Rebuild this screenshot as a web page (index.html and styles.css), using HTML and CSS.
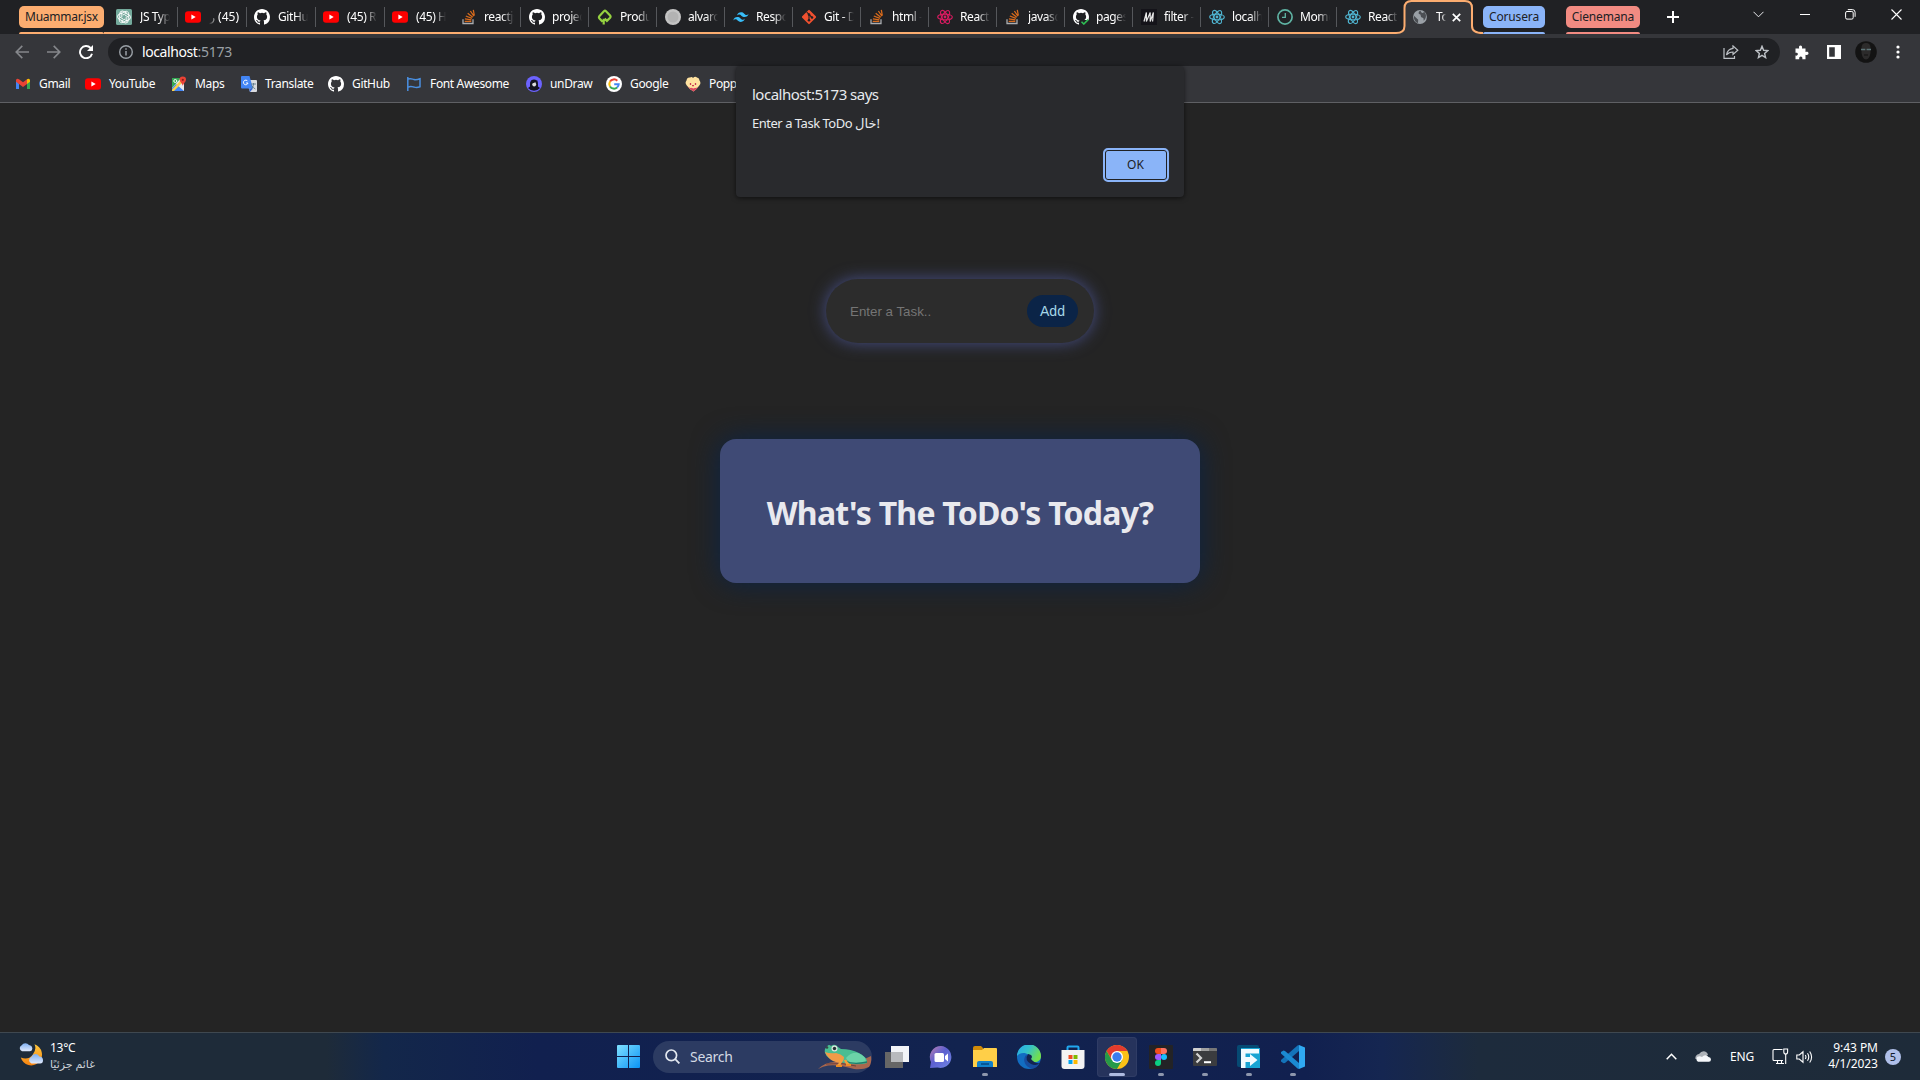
FILE: index.html
```html
<!DOCTYPE html>
<html lang="en">
<head>
<meta charset="utf-8">
<title>ToDo</title>
<link rel="stylesheet" href="styles.css">
</head>
<body>
<svg class="defs" width="0" height="0" aria-hidden="true">
  <defs>
    <symbol id="youtube" viewBox="0 0 16 16"><rect x="0" y="2.3" width="16" height="11.4" rx="3" fill="#f00"/><path d="M6.4 5.5v5l4.3-2.5z" fill="#fff"/></symbol>
    <symbol id="github" viewBox="0 0 16 16"><path fill="#fff" d="M8 0C3.58 0 0 3.58 0 8c0 3.54 2.29 6.53 5.47 7.59.4.07.55-.17.55-.38 0-.19-.01-.82-.01-1.49-2.01.37-2.53-.49-2.69-.94-.09-.23-.48-.94-.82-1.13-.28-.15-.68-.52-.01-.53.63-.01 1.08.58 1.23.82.72 1.21 1.87.87 2.33.66.07-.52.28-.87.51-1.07-1.78-.2-3.64-.89-3.64-3.95 0-.87.31-1.59.82-2.15-.08-.2-.36-1.02.08-2.12 0 0 .67-.21 2.2.82a7.6 7.6 0 0 1 4 0c1.53-1.04 2.2-.82 2.2-.82.44 1.1.16 1.92.08 2.12.51.56.82 1.27.82 2.15 0 3.07-1.87 3.75-3.65 3.95.29.25.54.73.54 1.48 0 1.07-.01 1.93-.01 2.2 0 .21.15.46.55.38A8.01 8.01 0 0 0 16 8c0-4.42-3.58-8-8-8z"/></symbol>
    <symbol id="stack" viewBox="0 0 16 16"><path d="M2 10.3v4.2h10v-4.2" fill="none" stroke="#aaadb0" stroke-width="1.3"/><path d="M3.7 12.3h6.6M3.9 9.8l6.5 1M4.8 7l6.1 2.3M6.7 4.3l5.1 4M9.4 2l3.5 5.2M12.3.8l1 5.7" stroke="#d96b1c" stroke-width="1.3" fill="none"/></symbol>
    <symbol id="react" viewBox="0 0 16 16"><g fill="none" stroke="currentColor" stroke-width="1.2"><ellipse cx="8" cy="8" rx="7.3" ry="2.9"/><ellipse cx="8" cy="8" rx="7.3" ry="2.9" transform="rotate(60 8 8)"/><ellipse cx="8" cy="8" rx="7.3" ry="2.9" transform="rotate(120 8 8)"/></g><circle cx="8" cy="8" r="1.4" fill="currentColor"/></symbol>
    <symbol id="openai" viewBox="0 0 16 16"><rect width="16" height="16" rx="1.5" fill="#74aa9c"/><g fill="none" stroke="#fff" stroke-width=".9"><path d="M6 4.3l3-1.7a2.5 2.5 0 0 1 3.7 2.3v3.3L8.9 6"/><path d="M6 4.3l3-1.7a2.5 2.5 0 0 1 3.7 2.3v3.3L8.9 6" transform="rotate(60 8 8)"/><path d="M6 4.3l3-1.7a2.5 2.5 0 0 1 3.7 2.3v3.3L8.9 6" transform="rotate(120 8 8)"/><path d="M6 4.3l3-1.7a2.5 2.5 0 0 1 3.7 2.3v3.3L8.9 6" transform="rotate(180 8 8)"/><path d="M6 4.3l3-1.7a2.5 2.5 0 0 1 3.7 2.3v3.3L8.9 6" transform="rotate(240 8 8)"/><path d="M6 4.3l3-1.7a2.5 2.5 0 0 1 3.7 2.3v3.3L8.9 6" transform="rotate(300 8 8)"/></g></symbol>
  </defs>
</svg>

<div class="screen">
  <header class="chrome">
    <div class="tabstrip">
      <span class="chip chip-orange">Muammar.jsx</span>
      <nav class="tabs">
        <div class="tab tab-first"><svg class="fav"><use href="#openai"/></svg><span class="tab-title">JS Types</span></div>
        <div class="tab tab-wide"><svg class="fav"><use href="#youtube"/></svg><span class="tab-title tab-title-rtl"><bdi>(45)</bdi> ر</span></div>
        <div class="tab tab-wide"><svg class="fav"><use href="#github"/></svg><span class="tab-title">GitHub</span></div>
        <div class="tab tab-wide"><svg class="fav"><use href="#youtube"/></svg><span class="tab-title">(45) Re</span></div>
        <div class="tab tab-wide"><svg class="fav"><use href="#youtube"/></svg><span class="tab-title">(45) Ho</span></div>
        <div class="tab"><svg class="fav"><use href="#stack"/></svg><span class="tab-title">reactjs</span></div>
        <div class="tab"><svg class="fav"><use href="#github"/></svg><span class="tab-title">project</span></div>
        <div class="tab"><svg class="fav" viewBox="0 0 16 16"><path d="M5.600 12.800L2.500 9.500Q1.400 8.200 2.500 7L6.900 2.200Q8 1.200 9 2.200L13.100 6.500Q14 7.600 13.100 8.700L9.900 11.900 7.600 9.600M6.700 15.500V9.800" fill="none" stroke="#95d140" stroke-width="2.200"/></svg><span class="tab-title">Produc</span></div>
        <div class="tab"><svg class="fav" viewBox="0 0 16 16"><circle cx="8" cy="8" r="8" fill="#c4c4c4"/><circle cx="8" cy="8" r="5.5" fill="#b3b3b3"/></svg><span class="tab-title">alvaro</span></div>
        <div class="tab"><svg class="fav" viewBox="0 0 16 16"><path d="M4 6.6C4.6 4.4 6 3.3 8 3.3c3 0 3.4 2.3 4.9 2.6 1 .3 1.9-.1 2.7-1.1-.6 2.2-2 3.3-4 3.3-3 0-3.400-2.300-4.900-2.600-1-.3-1.900.1-2.700 1.100zM.3 11.400C.9 9.200 2.300 8.100 4.300 8.100c3 0 3.400 2.300 4.900 2.600 1 .3 1.900-.1 2.700-1.100-.6 2.200-2 3.300-4 3.300-3 0-3.400-2.300-4.900-2.600-1-.3-1.900.1-2.700 1.100z" fill="#38bdf8"/></svg><span class="tab-title">Respo</span></div>
        <div class="tab"><svg class="fav" viewBox="0 0 16 16"><rect x="2.700" y="2.700" width="10.600" height="10.600" rx="1" transform="rotate(45 8 8)" fill="#f0502f"/><path d="M5.700 3l2.300 2.500v6M8 5.500l3 3" stroke="#202124" stroke-width="1.100" fill="none"/><g fill="#202124"><circle cx="8" cy="5.600" r="1.300"/><circle cx="8" cy="11.200" r="1.300"/><circle cx="11" cy="8.500" r="1.300"/></g></svg><span class="tab-title">Git - D</span></div>
        <div class="tab"><svg class="fav"><use href="#stack"/></svg><span class="tab-title">html -</span></div>
        <div class="tab"><svg class="fav react-pink"><use href="#react"/></svg><span class="tab-title">React</span></div>
        <div class="tab"><svg class="fav"><use href="#stack"/></svg><span class="tab-title">javascr</span></div>
        <div class="tab"><svg class="fav" viewBox="0 0 16 16"><use href="#github"/><path d="M7 11h9v5H7z" fill="#202124"/><path d="M8.500 12.700l2.300 2.300 4.400-4.400" stroke="#2fbd54" stroke-width="1.600" fill="none"/></svg><span class="tab-title">pages-</span></div>
        <div class="tab"><svg class="fav" viewBox="0 0 16 16"><path d="M0 0h16v16H0z" fill="#141319"/><path d="M3 12.500L5.400 3.500V12.500L9.200 3.500V12.500L12.400 3.500 11.600 12.500" stroke="#e8e8e8" stroke-width="1.200" fill="none"/></svg><span class="tab-title">filter -</span></div>
        <div class="tab"><svg class="fav react-blue"><use href="#react"/></svg><span class="tab-title">localho</span></div>
        <div class="tab"><svg class="fav" viewBox="0 0 16 16"><circle cx="8" cy="8" r="7.100" fill="none" stroke="#5fb3a3" stroke-width="1.700"/><path d="M8.300 4v4.300H5" stroke="#5fb3a3" stroke-width="1.300" fill="none"/></svg><span class="tab-title">Mome</span></div>
        <div class="tab tab-last"><svg class="fav react-blue"><use href="#react"/></svg><span class="tab-title">React</span></div>
      </nav>
      <div class="tab-active">
        <svg class="tab-shape" width="87" height="34" viewBox="0 0 87 34"><path d="M0 34V33C6 33 8.500 30.500 8.500 26V8q0-7 7-7H69q7 0 7 7V26C76 30.500 79 33 87 33V34z" fill="#35363a"/><path d="M0 33C6 33 8.500 30.500 8.500 26V8q0-7 7-7H69q7 0 7 7V26C76 30.500 79 33 87 33" fill="none" stroke="#fcad70" stroke-width="2"/></svg>
        <svg class="fav" viewBox="0 0 16 16"><circle cx="8" cy="8" r="6.900" fill="#9aa0a6"/><path d="M2 6.700l4.200 4.100-.2 3.200C3.500 13.300 1.500 10.500 2 6.700zM8.300 1.500C6.500 3 5.800 4.500 7.500 5.300c2 0 .5 2.700 2.500 3.200 2 .3 1.500 1.600 1.700 3.300 3-2.500 3-7 .3-9-1 2-2.500 1.500-3.700-1.300z" fill="#4b4e53"/></svg>
        <span class="tab-title">Tod</span>
        <svg class="close" viewBox="0 0 9 9"><path d="M.8.800l7.400 7.400M8.200.800L.8 8.200" stroke="#fff" stroke-width="1.700"/></svg>
      </div>
      <span class="chip chip-blue">Corusera</span>
      <span class="chip chip-red">Cienemana</span>
      <svg class="newtab" viewBox="0 0 12 12"><path d="M6 0v12M0 6h12" stroke="#fff" stroke-width="2"/></svg>
      <div class="caption">
        <svg width="11" height="7" viewBox="0 0 11 7"><path d="M.5.800l5 5 5-5" fill="none" stroke="#e8eaed"/></svg>
        <svg width="10" height="2" viewBox="0 0 10 2"><path d="M0 1.500h10" stroke="#fff"/></svg>
        <svg width="11" height="11" viewBox="0 0 11 11"><rect x=".6" y="2.500" width="7.600" height="7.600" rx="1.400" fill="none" stroke="#fff"/><path d="M2.800.600h4.600q2.700 0 2.700 2.700v4.500" fill="none" stroke="#fff"/></svg>
        <svg width="11" height="11" viewBox="0 0 11 11"><path d="M.5.500l10 10M10.500.500l-10 10" stroke="#fff" stroke-width="1.100"/></svg>
      </div>
    </div>

    <div class="toolbar">
      <div class="nav">
        <svg width="14" height="14" viewBox="0 0 14 14"><path d="M14 7H1.500M7.300.900L1.200 7l6.100 6.100" fill="none" stroke="#85878b" stroke-width="1.600"/></svg>
        <svg width="14" height="14" viewBox="0 0 14 14"><path d="M0 7h12.500M6.700.900L12.800 7l-6.100 6.100" fill="none" stroke="#85878b" stroke-width="1.600"/></svg>
        <svg width="14" height="14" viewBox="0 0 14 14"><path d="M11.600 3A6.100 6.100 0 1 0 13 8.700" fill="none" stroke="#fff" stroke-width="1.900"/><path d="M14 0v6H8z" fill="#fff"/></svg>
      </div>
      <div class="omnibox">
        <svg class="info" viewBox="0 0 14 14"><circle cx="7" cy="7" r="6.300" fill="none" stroke="#9aa0a6" stroke-width="1.400"/><path d="M7 6v4.600M7 3.200v1.600" stroke="#9aa0a6" stroke-width="1.500"/></svg>
        <span class="url">localhost<span class="port">:5173</span></span>
        <svg class="share" viewBox="0 0 16 14"><path d="M1 3v10.300h10.500V11" fill="none" stroke="#bdc1c6" stroke-width="1.200"/><path d="M10 .9L14.800 5.200 10 9.500V7C7 7 5 8 3.500 10 4 6.500 6 3.900 10 3.400z" fill="none" stroke="#bdc1c6" stroke-width="1.200"/></svg>
        <svg class="star" viewBox="0 0 14 14"><path d="M7 1.300l1.600 4 4.200.3-3.200 2.800 1 4.200L7 10.400l-3.600 2.200 1-4.200L1.200 5.600l4.200-.3z" fill="none" stroke="#bdc1c6" stroke-width="1.400"/></svg>
      </div>
      <div class="actions">
        <svg width="15" height="15" viewBox="0 0 15 15"><path d="M1.500 3.500h3.700C4.600 1.500 5.300.500 6.500.500S8.500 1.500 8 3.500h3.500V7c2-.6 3 .1 3 1.300s-1 2-3 1.400v4.500H8.300c.5-2-.4-2.800-1.500-2.800s-2 .8-1.500 2.800H1.500v-3.600c1.700.3 2.400-.5 2.400-1.500S3 7.400 1.500 7.800z" fill="#fff"/></svg>
        <svg width="14" height="14" viewBox="0 0 14 14"><path d="M0 0h14v14H0zM2.200 2.200v9.600h5.600V2.200z" fill="#fff" fill-rule="evenodd"/></svg>
        <svg width="22" height="22" viewBox="0 0 22 22"><circle cx="11" cy="11" r="10.800" fill="#131313"/><path d="M6.500 7q0-5 4.500-5t4.500 5v5q-1 6-4.500 6.500Q7.500 18 6.500 12z" fill="#2c2b2b"/><path d="M6 8.500h4.300M11.600 8.500H16" stroke="#5d7477" stroke-width="1.400"/><path d="M9 14h4" stroke="#121212"/></svg>
        <svg width="4" height="14" viewBox="0 0 4 14"><g fill="#fff"><circle cx="2" cy="2" r="1.600"/><circle cx="2" cy="7" r="1.600"/><circle cx="2" cy="12" r="1.600"/></g></svg>
      </div>
    </div>

    <div class="bookmarks">
      <a class="bm"><svg class="fav" viewBox="0 0 16 16"><path d="M1 3.500V13h3V7.500z" fill="#4285f4"/><path d="M12 13h3V3.500l-3 4z" fill="#34a853"/><path d="M4 8L1 5.700V4Q2 2 4 3.300l4 3 4-3v4.600l-4 3z" fill="#ea4335"/><path d="M12 3.300Q14 2 15 4v1.700L12 8z" fill="#fbbc04"/></svg><span>Gmail</span></a>
      <a class="bm"><svg class="fav"><use href="#youtube"/></svg><span>YouTube</span></a>
      <a class="bm"><svg class="fav" viewBox="0 0 16 16"><path d="M1 2h12v13H1z" fill="#e8eaed"/><path d="M1 2h9L1 12z" fill="#34a853"/><path d="M1 12l4-4 8 7H1z" fill="#4285f4"/><path d="M1 13.500L9 5l2 2-8 8H1z" fill="#fbd04a"/><circle cx="4.300" cy="5" r="1.500" fill="none" stroke="#fff"/><path d="M11.800.500a3.200 3.200 0 0 1 3.200 3.300c0 2.200-2.500 3.200-3.200 6-.7-2.800-3.200-3.800-3.200-6A3.200 3.200 0 0 1 11.800.500z" fill="#ea4335"/><circle cx="11.800" cy="3.800" r="1.100" fill="#8c1d18"/></svg><span>Maps</span></a>
      <a class="bm"><svg class="fav" viewBox="0 0 16 16"><path d="M5 4h10q1 0 1 1v10q0 1-1 1H9z" fill="#dadce0"/><path d="M1 0h7.500L12 12.500H1q-1 0-1-1V1q0-1 1-1z" fill="#4285f4"/><path d="M6.700 5.200A2.300 2.300 0 1 0 7 7H4.900" fill="none" stroke="#fff" stroke-width="1"/><path d="M10 8h5M12.500 7v1c0 2-1 4-2.500 5M10.800 9.500c.8 1.500 2 2.700 3.500 3.500" fill="none" stroke="#5f7a8a" stroke-width=".9"/><path d="M9 16l3-3.500H8z" fill="#3367d6"/></svg><span>Translate</span></a>
      <a class="bm"><svg class="fav"><use href="#github"/></svg><span>GitHub</span></a>
      <a class="bm"><svg class="fav" viewBox="0 0 16 16"><path d="M1.800 1v14M2 3c3-1 4 0 6 .5s3 .3 6-.8v8c-3 1.200-4 .9-6 .4s-3-1.100-6 0" fill="none" stroke="#4a8fe0" stroke-width="1.500"/></svg><span>Font Awesome</span></a>
      <a class="bm"><svg class="fav" viewBox="0 0 16 16"><circle cx="8" cy="8" r="8" fill="#6c63ff"/><path d="M4 8a4 4.500 0 0 1 8 0v2.500l2 1.500a8 8 0 0 1-12 0l2-1.500z" fill="#15151f"/><ellipse cx="8.200" cy="8.200" rx="1.900" ry="2.300" fill="#ddd"/><path d="M4.500 7q4 1 5-1.500L11.500 7V4.500H5z" fill="#15151f"/></svg><span>unDraw</span></a>
      <a class="bm"><svg class="fav" viewBox="0 0 16 16"><circle cx="8" cy="8" r="8" fill="#fff"/><g fill="none" stroke-width="2"><path d="M11.300 4.700A4.700 4.700 0 0 0 4 5.600" stroke="#ea4335"/><path d="M4 5.600a4.700 4.700 0 0 0 0 4.800" stroke="#fbbc05"/><path d="M4 10.400a4.700 4.700 0 0 0 7.100 1.100" stroke="#34a853"/><path d="M11.100 11.500A4.700 4.700 0 0 0 12.700 8.200H8.200" stroke="#4285f4"/></g></svg><span>Google</span></a>
      <a class="bm"><svg class="fav" viewBox="0 0 16 16"><path d="M8 2q2-2 4-.5 2.500.5 2.500 3 2 2.500-.2 5Q12 13 8.500 15.500 4 13 1.800 9.500-.5 7 1.500 4.500 2 1 5 1.500 7 .500 8 2z" fill="#ffe2a0"/><path d="M2.500 10.500Q5 13.500 8.500 15.500 12 13 13.600 10.500q-2 2-3.600 1.200-1.500 1.600-3.200 0-2 .8-4.300-1.200z" fill="#d9455f"/><path d="M5.500 7v2M10.500 7v2M7 9.700h2" stroke="#c93a55" stroke-width="1.300"/></svg><span>Popper</span></a>
    </div>
  </header>

  <main class="page">
    <form class="task-form">
      <input class="task-input" type="text" placeholder="Enter a Task..">
      <button class="task-add" type="button">Add</button>
    </form>
    <section class="todo-card">
      <h1 class="todo-title">What's The ToDo's Today?</h1>
    </section>
  </main>

  <footer class="taskbar">
    <div class="weather">
      <svg width="26" height="24" viewBox="0 0 26 24"><defs><linearGradient id="moon" x1="0" y1="0" x2="0" y2="1"><stop offset="0" stop-color="#ffc83d"/><stop offset="1" stop-color="#f7830f"/></linearGradient><linearGradient id="cloud" x1="0" y1="0" x2="0" y2="1"><stop offset="0" stop-color="#7fb0f2"/><stop offset="1" stop-color="#e1e9fb"/></linearGradient></defs><path d="M16.500 2.300A10.800 10.800 0 1 1 2.800 15.500Q10 18.500 14.500 13T16.500 2.300z" fill="url(#moon)"/><path d="M4 9.200a3.200 3.200 0 0 1-.3-6A4.500 4.500 0 0 1 11 3q3 .5 3.300 3.200T12 9.200z" fill="url(#cloud)"/><path d="M13.500 21.500a3.500 3.500 0 0 1-.2-6.600q1.200-2.800 4-2.800t4 2.400q3.700.300 3.700 3.700T22 21.500z" fill="url(#cloud)"/></svg>
      <div class="weather-text"><span>13°C</span><span class="weather-desc" dir="rtl">غائم جزئيًا</span></div>
    </div>
    <div class="dock">
      <svg class="start" viewBox="0 0 23 23"><defs><linearGradient id="win" x1="0" y1="0" x2="1" y2="1"><stop offset="0" stop-color="#7fe0ff"/><stop offset="1" stop-color="#0a93f5"/></linearGradient></defs><path d="M0 1q0-1 1-1h10v11H0zM12 0h10q1 0 1 1v10H12zM0 12h11v11H1q-1 0-1-1zM12 12h11v10q0 1-1 1H12z" fill="url(#win)"/></svg>
      <div class="search">
        <svg width="15" height="15" viewBox="0 0 15 15"><circle cx="6.300" cy="6.300" r="5.300" fill="none" stroke="#e3e8f0" stroke-width="1.700"/><path d="M10.200 10.200l4.200 4.200" stroke="#e3e8f0" stroke-width="1.800"/></svg>
        <span>Search</span>
        <svg class="frog" width="54" height="26" viewBox="0 0 54 26"><path d="M0 25Q8 17 20 18q16 3 33-6 1 7-2 11-6 3-15 2Q20 20 10 21.500 5 22 0 25z" fill="#a9674e"/><path d="M8 20q16-2 30 2" fill="none" stroke="#74423a"/><path d="M7 9q-1-4 2-6.500Q11 0 13 2q4-3 7 1l3 2q10 0 18 4 9 5 8 10-5 2-14 1L19 18Q9 15 7 9z" fill="#49bd92"/><path d="M7 8q5 2 11 1 5 1 8 4 0 4-3 6-9-1-12-5-3-3-4-6z" fill="#f29b48"/><path d="M28 14q5-6 12-5 8 3 8 9l-10 1q-8 0-10-5z" fill="#6cd3a8"/><path d="M27 17q8 4 22 1" fill="none" stroke="#207b6b" stroke-width="1.300"/><path d="M22 14q2 4-2 8M27 16q2 4 4 5" stroke="#f2a03d" stroke-width="2.500" fill="none"/><path d="M18 22h6M28 21h5" stroke="#ee8d22" stroke-width="2"/><circle cx="16.500" cy="4.500" r="3" fill="#dde5df"/><circle cx="16.500" cy="4.500" r="1.700" fill="#253234"/><circle cx="9" cy="3.500" r="1.300" fill="#344947"/></svg>
      </div>
      <div class="app"><svg width="24" height="22" viewBox="0 0 24 22"><path d="M6 0h18v16H6z" fill="#f2f4f7"/><path d="M0 6h18v16H0z" fill="#666"/><path d="M6 6h12v10H6z" fill="#b8babd"/></svg></div>
      <div class="app"><svg width="24" height="24" viewBox="0 0 24 24"><defs><linearGradient id="chat" x1="0" y1="0" x2="1" y2="1"><stop offset="0" stop-color="#bd7fae"/><stop offset=".45" stop-color="#5b5fd0"/><stop offset="1" stop-color="#7288e4"/></linearGradient></defs><path d="M12 1a11 11 0 1 1-3.500 21.600L1 23l1-6A11 11 0 0 1 12 1z" fill="url(#chat)"/><rect x="5.500" y="8" width="9.500" height="9" rx="1.500" fill="#fff"/><path d="M16 11l3-2.500v8L16 14z" fill="#fff"/></svg></div>
      <div class="app run"><svg width="24" height="24" viewBox="0 0 24 24"><path d="M0 3q0-2 2-2h6l2 2v4H0z" fill="#d18b08"/><path d="M0 5h9l2-2h12q1 0 1 1v18H0z" fill="#ffcf48"/><path d="M4 22v-4q0-2 2-2h12q2 0 2 2v4z" fill="#1180ca"/><path d="M8 19h8" stroke="#075595" stroke-width="2"/></svg></div>
      <div class="app"><svg width="24" height="24" viewBox="0 0 24 24"><defs><linearGradient id="edge" x1="0" y1="0" x2="1" y2=".5"><stop offset="0" stop-color="#26a8ee"/><stop offset=".5" stop-color="#35c1c9"/><stop offset="1" stop-color="#72df4e"/></linearGradient></defs><circle cx="12" cy="12" r="12" fill="#126dc2"/><path d="M0 11A12 12 0 0 1 24 11.500C24 15 21 17 18 17c-4 0-5-1.500-4-3 1.500-5-10-9-14-3z" fill="url(#edge)"/><path d="M9 10c-4 5-1 12 6 13.500 3 0 6-2 7.500-5C16 21 10 17 11.500 11z" fill="#174c9e"/><path d="M14 14q3-4-3-5-4 6 3 10 5 2 8.500-.5Q17 18 14 14z" fill="#13244f"/></svg></div>
      <div class="app"><svg width="24" height="24" viewBox="0 0 24 24"><path d="M6.500 6V2.500q0-1 1-1h9q1 0 1 1V6" fill="none" stroke="#20a8ef" stroke-width="2"/><path d="M.5 5h23v16q0 3-3 3h-17q-3 0-3-3z" fill="#f3f3f3"/><path d="M7.500 10h4v4h-4z" fill="#f04f24"/><path d="M12.500 10h4v4h-4z" fill="#7fba00"/><path d="M7.500 15h4v4h-4z" fill="#00a4ef"/><path d="M12.500 15h4v4h-4z" fill="#ffb900"/></svg></div>
      <div class="app focus"><svg width="24" height="24" viewBox="0 0 24 24"><circle cx="12" cy="12" r="12" fill="#fbc116"/><path d="M1.600 6A12 12 0 0 1 22.400 6H12L7 15z" fill="#e33b2e"/><path d="M1.600 6A12 12 0 0 0 12 24l5.200-9H6.800z" fill="#269a48"/><circle cx="12" cy="12" r="6" fill="#fff"/><circle cx="12" cy="12" r="4.700" fill="#3b7ded"/></svg></div>
      <div class="app run"><svg width="24" height="24" viewBox="0 0 24 24"><rect width="24" height="24" rx="1" fill="#232326"/><path d="M12 3H9a3 3 0 0 0 0 6h3z" fill="#f24e1e"/><path d="M12 3h3a3 3 0 0 1 0 6h-3z" fill="#ff7262"/><path d="M12 9H9a3 3 0 0 0 0 6h3z" fill="#a259ff"/><circle cx="15" cy="12" r="3" fill="#1abcfe"/><path d="M12 15H9a3 3 0 1 0 3 3z" fill="#0acf83"/></svg></div>
      <div class="app run"><svg width="24" height="18" viewBox="0 0 24 18"><rect width="24" height="18" rx="1" fill="#3b3c3f"/><path d="M0 3V1q0-1 1-1h7v3z" fill="#d0d0d0"/><path d="M8 0h8v3H8z" fill="#a0a0a0"/><path d="M16 0h7q1 0 1 1v2h-8z" fill="#777"/><path d="M3.500 5.500L8 10l-4.500 4.500" fill="none" stroke="#d4d4d4" stroke-width="2.200"/><path d="M11 14.200h7" stroke="#fff" stroke-width="2"/></svg></div>
      <div class="app run"><svg width="24" height="24" viewBox="0 0 24 24"><rect width="22" height="22" rx="2" fill="#064a73"/><rect x="4" y="3" width="19" height="20" fill="#18a4d3"/><path d="M4 4h18v4.500H8.500V12H13V9l7.500 6-7.500 6v-4H8.500v6H4z" fill="#f1fbff"/></svg></div>
      <div class="app run"><svg width="24" height="24" viewBox="0 0 24 24"><path d="M18 0v6L4 18l-1.500.300L0 16.500V15L16.500.5z" fill="#1473b9"/><path d="M0 8.500V7l2.500-1.500L4 6l14 12v6l-1.500-.5z" fill="#1b8ad2"/><path d="M18 0l6 2.500v19L18 24z" fill="#30a9f2"/></svg></div>
    </div>
    <div class="tray">
      <svg class="up" width="11" height="7" viewBox="0 0 11 7"><path d="M.7 6.300l4.800-5 4.800 5" fill="none" stroke="#fff" stroke-width="1.500"/></svg>
      <svg class="cloud" width="16" height="11" viewBox="0 0 16 11"><path d="M.5 8A4 4 0 0 1 4 3Q6 .300 8.500.300 12 .3 13 4l-6 3z" fill="#aeb3b9"/><path d="M3 10.700a3 3 0 0 1-.5-5Q5 4.500 7 6q2-2.300 4.500-1.500Q13 5 13.500 6q2.500.400 2.500 2.500 0 2.200-2.200 2.200z" fill="#f5f7fa"/></svg>
      <span class="lang">ENG</span>
      <svg class="net" width="17" height="17" viewBox="0 0 17 17"><path d="M10.500 1.500H2q-1 0-1 1v9q0 1 1 1h9M4 15.500h8M5.500 12.500v3M9.500 12.500v3" fill="none" stroke="#fff" stroke-width="1.100"/><path d="M11.800 1h3.800v3q0 2-1.900 2t-1.900-2zM13.700 6v10" fill="none" stroke="#fff" stroke-width="1.100"/></svg>
      <svg class="sound" width="17" height="14" viewBox="0 0 17 14"><path d="M.8 5v4h2.500L7 12.200V1.800L3.300 5zM9.300 5q1.300 2 0 4M11.500 3.300q2.500 3.700 0 7.400M13.700 1.500q3.800 5.500 0 11" fill="none" stroke="#fff" stroke-width="1.100"/></svg>
      <div class="clock"><span>9:43 PM</span><span>4/1/2023</span></div>
      <span class="count">5</span>
    </div>
  </footer>

  <div class="dialog" role="alertdialog">
    <p class="dialog-title">localhost:5173 says</p>
    <p class="dialog-text">Enter a Task ToDo خال!</p>
    <button class="dialog-ok" type="button">OK</button>
  </div>
</div>
</body>
</html>
```
FILE: styles.css
```css
* { box-sizing: border-box; }

body {
  margin: 0;
  background: #242424;
  font-family: "Noto Sans", "Open Sans", "DejaVu Sans", sans-serif;
  font-size: 12px;
  color: #fff;
  overflow: hidden;
}

svg { display: block; flex: none; }
.defs { position: absolute; }

.screen {
  position: relative;
  display: flex;
  flex-direction: column;
  width: 1920px;
  height: 1080px;
}

/* browser frame */
.chrome { flex: none; height: 103px; background: #35363a; border-bottom: 1px solid #5f6064; }

.tabstrip { display: flex; height: 34px; background: #202124; }

.chip {
  position: relative;
  flex: none;
  height: 22px;
  margin-top: 6px;
  border-radius: 5px;
  line-height: 22px;
  text-align: center;
  color: #202124;
  letter-spacing: -0.15px;
}
.chip-orange { width: 85px; margin-left: 19px; background: #fcad70; letter-spacing: -0.25px; }
.chip-blue { width: 62px; background: #8ab4f8; }
.chip-red { width: 74px; margin-left: 21px; background: #f28b82; }
.chip::after {
  content: "";
  position: absolute;
  left: 0;
  right: 0;
  top: 26px;
  height: 2px;
  border-radius: 2px 2px 0 0;
  background: inherit;
}

.tabs { display: flex; flex: none; width: 1292px; border-bottom: 2px solid #fcad70; }
.tab {
  display: flex;
  flex: none;
  align-items: center;
  gap: 7px;
  width: 68px;
  padding: 2px 0 0 8px;
}
.tab::after { content: ""; width: 1px; height: 20px; margin-left: -1px; background: #55575b; }
.tab-first { width: 74px; padding-left: 12px; gap: 8px; }
.tab-wide { width: 69px; gap: 8px; padding-left: 7px; }
.tab-wide:nth-child(5) { width: 68px; }
.tab-last { width: 59px; }
.tab-last::after { display: none; }
.fav { width: 16px; height: 16px; }
.tab-title {
  flex: none;
  width: 30px;
  overflow: hidden;
  white-space: nowrap;
  line-height: 18px;
  letter-spacing: -0.4px;
  -webkit-mask-image: linear-gradient(to right, #000 60%, transparent);
  mask-image: linear-gradient(to right, #000 60%, transparent);
}
.tab-title-rtl {
  direction: rtl;
  -webkit-mask-image: linear-gradient(to left, #000 70%, transparent);
  mask-image: linear-gradient(to left, #000 70%, transparent);
}
.react-pink { color: #d81b60; }
.react-blue { color: #4fb3cf; }

.tab-active {
  position: relative;
  display: flex;
  align-items: center;
  flex: none;
  width: 87px;
  padding-left: 16px;
}
.tab-shape { position: absolute; left: 0; top: 0; }
.tab-active .fav, .tab-active .tab-title, .close { position: relative; }
.tab-active .tab-title { width: 10px; margin-left: 8px; }
.close { width: 9px; height: 9px; margin-left: 6px; }

.newtab { width: 12px; height: 12px; margin: 11px 0 0 27px; }

.caption { display: flex; align-items: center; flex: 1; height: 28px; padding-left: 74px; }
.caption svg:nth-child(2) { margin-left: 36px; }
.caption svg:nth-child(3) { margin-left: 35px; }
.caption svg:nth-child(4) { margin-left: 35px; }

.toolbar { display: flex; height: 32px; padding-top: 4px; }
.nav { display: flex; flex: none; align-items: center; gap: 18px; width: 108px; padding-left: 15px; }
.omnibox {
  display: flex;
  flex: none;
  align-items: center;
  width: 1672px;
  height: 28px;
  padding: 0 11px;
  border-radius: 14px;
  background: #202124;
  font-size: 14px;
}
.omnibox .info { width: 14px; height: 14px; }
.url { flex: 1; margin: -1px 0 0 9px; letter-spacing: -0.42px; }
.port { color: #9aa0a6; letter-spacing: -0.25px; }
.share { width: 16px; height: 14px; margin-right: 16px; }
.star { width: 14px; height: 14px; }
.actions { display: flex; align-items: center; margin-left: 14px; }
.actions svg:nth-child(2) { margin-left: 18px; }
.actions svg:nth-child(3) { margin-left: 14px; }
.actions svg:nth-child(4) { margin-left: 19px; }

.bookmarks {
  display: grid;
  grid-template-columns: 70px 86px 70px 87px 78px 120px 80px 79px 70px;
  align-items: center;
  height: 36px;
  padding-left: 15px;
}
.bm { display: flex; align-items: center; gap: 8px; white-space: nowrap; line-height: 16px; letter-spacing: -0.35px; }
.bm span { padding-bottom: 1px; }

/* to-do page */
.page { flex: 1; display: flex; flex-direction: column; align-items: center; padding-top: 176px; }
.task-form {
  display: flex;
  align-items: center;
  justify-content: space-between;
  width: 268px;
  height: 64px;
  padding: 0 16px 0 24px;
  border-radius: 32px;
  background: #2c2c2c;
  box-shadow: 0 0 16px #474f86;
}
.task-input {
  width: 160px;
  padding: 0;
  border: 0;
  background: transparent;
  font: 13.333px "Liberation Sans", sans-serif;
  color: #fff;
}
.task-input::placeholder { color: #757575; }
.task-add {
  width: 51px;
  height: 32px;
  padding: 0;
  border: 0;
  border-radius: 16px;
  background: #0b2447;
  color: #a5d7e8;
  font: 14px "Liberation Sans", sans-serif;
}
.todo-card {
  display: flex;
  align-items: center;
  justify-content: center;
  width: 480px;
  height: 144px;
  margin-top: 96px;
  border-radius: 16px;
  background: #3f4a75;
  box-shadow: 0 0 28px #0b2447;
}
.todo-title {
  margin: 3px 0 0;
  font-size: 32px;
  line-height: 44px;
  font-weight: 700;
  white-space: nowrap;
  letter-spacing: -0.77px;
  color: #e9e9ee;
}

/* alert */
.dialog {
  position: absolute;
  left: 736px;
  top: 66px;
  display: flex;
  flex-direction: column;
  width: 448px;
  height: 131px;
  padding: 18px 15px 15px 16px;
  border-radius: 4px;
  background: #292a2d;
  box-shadow: 0 1px 5px rgba(0, 0, 0, 0.6);
  color: #e8eaed;
}
.dialog-title { margin: 0; font-size: 15px; line-height: 20px; letter-spacing: -0.5px; }
.dialog-text { margin: 9px 0 0; font-size: 13px; line-height: 20px; letter-spacing: -0.48px; white-space: nowrap; }
.dialog-ok {
  align-self: flex-end;
  width: 66px;
  height: 34px;
  margin-top: 15px;
  padding: 0 1px 2px 0;
  border: 2px solid #8ab4f8;
  border-radius: 5px;
  background: #8ab4f8;
  box-shadow: inset 0 0 0 1px #202124;
  font: 12px "Noto Sans", sans-serif;
  color: #202124;
}

/* taskbar */
.taskbar {
  display: grid;
  grid-template-columns: 616px 1fr 260px;
  flex: none;
  height: 48px;
  border-top: 1px solid #3f4850;
  background: linear-gradient(to right, #1e2b39 0, #1e2b39 17%, #13274a 20%, #11204f 28%, #12234f 50%, #11204f 68%, #152651 72%, #1d2b3c 77%, #1e2b39 100%);
}
.weather { display: flex; padding: 7px 0 0 18px; gap: 6px; }
.weather svg { margin-top: 2px; }
.weather-text { display: flex; flex-direction: column; align-items: flex-start; line-height: 16px; letter-spacing: -0.3px; }
.weather-desc { font-size: 11px; color: #cdd3d9; letter-spacing: 0; }

.dock { display: flex; align-items: center; }
.start { width: 23px; height: 23px; margin-left: 1px; }
.search {
  display: flex;
  align-items: center;
  width: 219px;
  height: 32px;
  margin: 0 5px 0 13px;
  padding-left: 12px;
  border-radius: 16px;
  background: #2c3b62;
  font-size: 14px;
  letter-spacing: -0.3px;
  color: #d3d9e4;
}
.search span { flex: 1; margin-left: 10px; padding-bottom: 1px; }
.app { position: relative; display: flex; align-items: center; justify-content: center; width: 40px; height: 40px; margin-right: 4px; }
.run::after, .focus::after {
  content: "";
  position: absolute;
  bottom: 1px;
  width: 6px;
  height: 3px;
  border-radius: 2px;
  background: #8e97ad;
}
.focus { border-radius: 4px; background: #26335c; box-shadow: inset 0 0 0 1px #2f3c65; }
.focus::after { width: 16px; background: #aebbe0; }

.tray { display: flex; align-items: center; padding-left: 6px; }
.cloud { margin-left: 18px; }
.lang { margin-left: 19px; letter-spacing: -0.2px; }
.net { margin-left: 18px; }
.sound { margin-left: 7px; }
.clock { display: flex; flex-direction: column; align-items: flex-end; width: 65px; padding-bottom: 1px; line-height: 16px; letter-spacing: -0.05px; }
.count {
  width: 16px;
  height: 16px;
  margin-left: 7px;
  border-radius: 50%;
  background: #b0c0ea;
  color: #111a2c;
  font-size: 11px;
  line-height: 16px;
  text-align: center;
}
```
